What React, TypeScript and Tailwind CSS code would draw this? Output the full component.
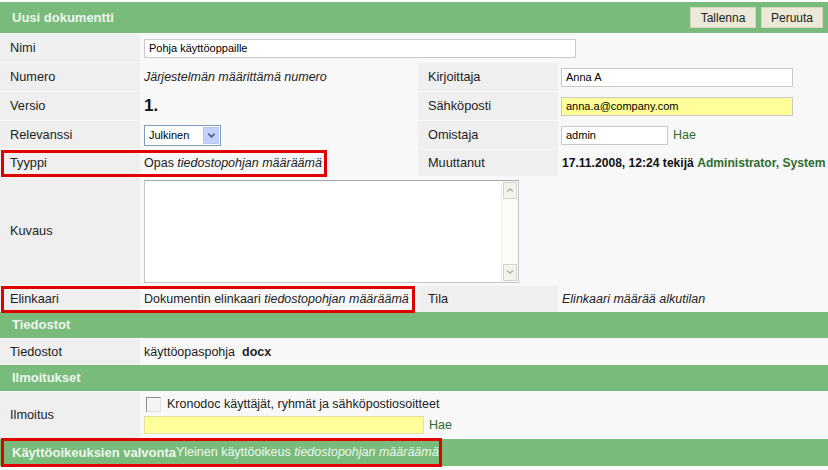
import { ChevronDown, ChevronUp } from "lucide-react";

const font = "font-['Liberation_Sans',Arial,sans-serif]";

function Label({ children }: { children: React.ReactNode }) {
  return (
    <div className="w-[140px] shrink-0 bg-[#efefef] pl-[10px] flex items-center text-[12.75px] text-[#222]">
      {children}
    </div>
  );
}

function Input({ value, w, yellow }: { value: string; w: string; yellow?: boolean }) {
  return (
    <div
      className={`${w} h-[19px] border border-[#c9c9c9] flex items-center pl-[4px] text-[11px] text-black ${
        yellow ? "bg-[#ffff99]" : "bg-white"
      }`}
    >
      {value}
    </div>
  );
}

function SectionBar({ children }: { children: React.ReactNode }) {
  return (
    <div className="h-[26px] bg-[#78bb7b] flex items-center pl-[12px] text-[13px] font-bold text-[#eef8ee]">
      {children}
    </div>
  );
}

export default function App() {
  return (
    <div className={`${font} w-[828px] h-[470px] bg-white overflow-hidden`}>
      <div className="mt-[2px] h-[31px] bg-[#78bb7b] flex items-center justify-between pl-[12px] pr-[5px]">
        <span className="text-[13px] font-bold text-[#eef8ee]">Uusi dokumentti</span>
        <div className="flex gap-[5px]">
          <button className="h-[21px] w-[66px] bg-[#ece9d8] border border-[#d8d4c0] text-[12px] text-[#222]">
            Tallenna
          </button>
          <button className="h-[21px] w-[62px] bg-[#ece9d8] border border-[#d8d4c0] text-[12px] text-[#222]">
            Peruuta
          </button>
        </div>
      </div>

      <div className="bg-[#f8f8f8] flex flex-col gap-[1px] pt-[1px]">
        {/* Nimi */}
        <div className="h-[28px] flex">
          <Label>Nimi</Label>
          <div className="flex items-center pl-[4px]">
            <Input value="Pohja käyttöoppaille" w="w-[432px]" />
          </div>
        </div>

        {/* Numero / Kirjoittaja */}
        <div className="h-[28px] flex">
          <Label>Numero</Label>
          <div className="w-[278px] shrink-0 flex items-center pl-[4px] text-[12.5px] italic text-[#222]">
            Järjestelmän määrittämä numero
          </div>
          <Label>Kirjoittaja</Label>
          <div className="flex items-center pl-[3px]">
            <Input value="Anna A" w="w-[232px]" />
          </div>
        </div>

        {/* Versio / Sähköposti */}
        <div className="h-[28px] flex">
          <Label>Versio</Label>
          <div className="w-[278px] shrink-0 flex items-center pl-[4px] text-[17px] font-bold text-[#111]">1.</div>
          <Label>Sähköposti</Label>
          <div className="flex items-center pl-[3px]">
            <Input value="anna.a@company.com" w="w-[232px]" yellow />
          </div>
        </div>

        {/* Relevanssi / Omistaja */}
        <div className="h-[28px] flex">
          <Label>Relevanssi</Label>
          <div className="w-[278px] shrink-0 flex items-center pl-[4px]">
            <div className="w-[77px] h-[21px] border border-[#7f9db9] bg-white flex items-center">
              <span className="flex-1 pl-[4px] text-[11px] text-black">Julkinen</span>
              <span className="w-[16px] h-[17px] mr-[1px] bg-[#c1d3fb] border border-[#b3c7f0] flex items-center justify-center">
                <ChevronDown size={11} strokeWidth={3.5} className="text-[#4d6185]" />
              </span>
            </div>
          </div>
          <Label>Omistaja</Label>
          <div className="flex items-center pl-[3px] gap-[5px]">
            <Input value="admin" w="w-[107px]" />
            <span className="text-[12.5px] text-[#2e6b2e]">Hae</span>
          </div>
        </div>

        {/* Tyyppi / Muuttanut */}
        <div className="h-[26px] flex relative">
          <Label>Tyyppi</Label>
          <div className="w-[278px] shrink-0 flex items-center pl-[4px] text-[12.5px] text-[#222] whitespace-nowrap">
            Opas&nbsp;<i>tiedostopohjan määräämä</i>
          </div>
          <Label>Muuttanut</Label>
          <div className="flex items-center pl-[4px] text-[12.1px] font-bold text-[#111] whitespace-nowrap">
            17.11.2008, 12:24 tekijä&nbsp;<span className="text-[#2e6b2e]">Administrator, System</span>
          </div>
          <div className="absolute left-[1px] top-0 w-[326px] h-[27px] border-[3px] border-[#e00000]" />
        </div>

        {/* Kuvaus */}
        <div className="h-[108px] flex">
          <Label>Kuvaus</Label>
          <div className="flex items-center pl-[4px]">
            <div className="w-[375px] h-[103px] border border-[#c4c4c4] border-t-[#a8a8a8] bg-white flex justify-end">
              <div className="w-[17px] bg-[#fbfbf8] border-l border-[#eeeeea] flex flex-col justify-between">
                <div className="h-[17px] m-[1px] border border-[#d5d5cf] bg-[#f3f3ee] flex items-center justify-center">
                  <ChevronUp size={10} strokeWidth={3} className="text-[#b0b0a8]" />
                </div>
                <div className="h-[17px] m-[1px] border border-[#d5d5cf] bg-[#f3f3ee] flex items-center justify-center">
                  <ChevronDown size={10} strokeWidth={3} className="text-[#b0b0a8]" />
                </div>
              </div>
            </div>
          </div>
        </div>

        {/* Elinkaari / Tila */}
        <div className="h-[26px] flex relative">
          <Label>Elinkaari</Label>
          <div className="w-[278px] shrink-0 flex items-center pl-[4px] text-[12.5px] text-[#222] whitespace-nowrap">
            Dokumentin elinkaari&nbsp;<i>tiedostopohjan määräämä</i>
          </div>
          <Label>Tila</Label>
          <div className="flex items-center pl-[4px] text-[12.5px] italic text-[#222]">Elinkaari määrää alkutilan</div>
          <div className="absolute left-[1px] top-0 w-[414px] h-[27px] border-[3px] border-[#e00000]" />
        </div>
      </div>

      <SectionBar>Tiedostot</SectionBar>
      <div className="bg-[#f8f8f8] pt-[1px]">
        <div className="h-[26px] flex">
          <Label>Tiedostot</Label>
          <div className="flex items-center pl-[4px] text-[12.5px] text-[#222]">
            käyttöopaspohja&nbsp;&nbsp;<b>docx</b>
          </div>
        </div>
      </div>

      <SectionBar>Ilmoitukset</SectionBar>
      <div className="bg-[#f8f8f8] pt-[1px]">
        <div className="h-[46px] flex">
          <Label>Ilmoitus</Label>
          <div className="flex flex-col justify-center pl-[4px] gap-[2px]">
            <div className="flex items-center gap-[6px] pl-[2px]">
              <span className="w-[15px] h-[15px] border border-[#8a8a8a] border-r-[#e0e0e0] border-b-[#e0e0e0] bg-[#f4f4f4]" />
              <span className="text-[12.5px] text-[#222]">Kronodoc käyttäjät, ryhmät ja sähköpostiosoitteet</span>
            </div>
            <div className="flex items-center gap-[5px]">
              <div className="w-[280px] h-[18px] bg-[#ffff99] border border-[#e3e3a0]" />
              <span className="text-[12.5px] text-[#2e6b2e]">Hae</span>
            </div>
          </div>
        </div>
      </div>

      <div className="relative mt-[1px] h-[27px] bg-[#78bb7b] flex items-center pl-[12px] text-[#eef8ee] whitespace-nowrap">
        <span className="text-[13px] font-bold">Käyttöoikeuksien valvonta</span>
        <span className="text-[12.5px]">
          Yleinen käyttöoikeus <i>tiedostopohjan määräämä</i>
        </span>
        <div className="absolute left-[1px] -top-[1px] w-[441px] h-[29px] border-[3px] border-[#e00000]" />
      </div>
    </div>
  );
}
